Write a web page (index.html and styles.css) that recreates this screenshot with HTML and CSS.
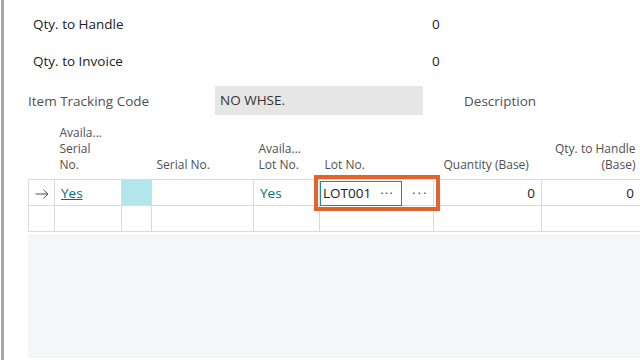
FILE: index.html
```html
<!DOCTYPE html>
<html lang="en">
<head>
  <meta charset="UTF-8" />
  <title>Item Tracking Lines</title>
  <link rel="stylesheet" href="styles.css">
</head>
<body>
  <div class="page">
    <div class="fields">
      <div class="field qty">
        <span class="label">Qty. to Handle</span>
        <span class="value">0</span>
      </div>
      <div class="field qty second">
        <span class="label">Qty. to Invoice</span>
        <span class="value">0</span>
      </div>
      <div class="field code">
        <span class="label muted">Item Tracking Code</span>
        <span class="box">NO WHSE.</span>
        <span class="label muted desc">Description</span>
      </div>
    </div>

    <div class="grid-wrap">
      <table class="lines">
        <colgroup>
          <col class="c-arrow"><col class="c-avser"><col class="c-pick">
          <col class="c-serial"><col class="c-avlot"><col class="c-lot">
          <col class="c-qty"><col class="c-handle"><col class="c-rest">
        </colgroup>
        <thead>
          <tr>
            <th></th>
            <th>Availa...<br>Serial<br>No.</th>
            <th></th>
            <th>Serial No.</th>
            <th>Availa...<br>Lot No.</th>
            <th>Lot No.</th>
            <th class="wide">Quantity (Base)</th>
            <th class="num">Qty. to Handle<br>(Base)</th>
            <th></th>
          </tr>
        </thead>
        <tbody>
          <tr>
            <td class="arrow">
              <svg width="14" height="10" viewBox="0 0 14 10"><path d="M0.5 5H13M8.5 0.8L13 5L8.5 9.2" fill="none" stroke="#505050" stroke-width="1"/></svg>
            </td>
            <td><a class="link" href="#">Yes</a></td>
            <td class="picked"></td>
            <td></td>
            <td class="teal">Yes</td>
            <td class="lot">
              <div class="focus">
                <span class="input">LOT001<span class="dots">&middot;&middot;&middot;</span></span>
                <span class="more">&middot;&middot;&middot;</span>
              </div>
            </td>
            <td class="num">0</td>
            <td class="num">0</td>
            <td></td>
          </tr>
          <tr>
            <td></td><td></td><td></td><td></td><td></td><td></td><td></td><td></td><td></td>
          </tr>
        </tbody>
      </table>
      <div class="empty"></div>
    </div>
  </div>
</body>
</html>
```

FILE: styles.css
```css
html, body {
  margin: 0;
  padding: 0;
  background: #fff;
  font-family: "Open Sans", "Noto Sans", sans-serif;
  color: #212121;
  overflow: hidden;
  width: 640px;
  height: 360px;
}
.page {
  height: 360px;
  border-left: 3px solid #a6a6a6;
  margin-left: 1px;
  box-sizing: border-box;
  overflow: hidden;
}
.fields {
  padding-top: 12px;
}
.field {
  display: flex;
  align-items: center;
  font-size: 13.5px;
}
.field .label, .field .box {
  flex: none;
}
.field.qty {
  height: 24px;
  padding-left: 29px;
}
.field.second {
  margin-top: 13px;
}
.field.qty .label {
  width: 399px;
}
.field.code {
  margin-top: 13px;
  height: 29px;
  padding-left: 24px;
}
.field.code .label {
  width: 187px;
}
.muted {
  color: #505050;
}
.box {
  width: 203px;
  height: 29px;
  line-height: 29px;
  padding-left: 5px;
  background: #e6e6e6;
  color: #333;
}
.field.code .desc {
  margin-left: 41px;
}
.grid-wrap {
  margin-top: 9px;
  margin-left: 24px;
}
.lines {
  border-collapse: collapse;
  table-layout: fixed;
  width: 732px;
  font-size: 13.5px;
}
.c-arrow { width: 26px; }
.c-avser { width: 67px; }
.c-pick { width: 30px; }
.c-serial { width: 102px; }
.c-avlot { width: 66px; }
.c-lot { width: 114px; }
.c-qty { width: 108px; }
.c-handle { width: 99px; }
.c-rest { width: 120px; }
.lines th {
  font-weight: normal;
  font-size: 12px;
  line-height: 16px;
  color: #505050;
  text-align: left;
  vertical-align: bottom;
  padding: 0 5px 6px 5px;
  height: 49px;
  white-space: nowrap;
}
.lines th.wide {
  padding-left: 10px;
}
.lines th.num, .lines td.num {
  text-align: right;
}
.lines td {
  height: 26px;
  border: 1px solid #dadada;
  padding: 0 6px;
  box-sizing: border-box;
}
.lines td.arrow {
  text-align: center;
  padding: 2px 0 0 0;
}
.link {
  color: #00717a;
  text-decoration: underline;
}
.teal {
  color: #00717a;
}
.picked {
  background: #b2e6ea;
}
.lines td.lot {
  position: relative;
  padding: 0;
}
.focus {
  position: absolute;
  left: -6px;
  top: -5px;
  width: 116px;
  height: 28px;
  border: 4px solid #e5612c;
  display: flex;
  align-items: center;
  padding-left: 2px;
}
.input {
  box-sizing: border-box;
  width: 82px;
  height: 25px;
  border: 1px solid #1f8a8f;
  display: flex;
  align-items: center;
  padding-left: 2px;
  color: #212121;
}
.dots {
  margin-left: 9px;
  color: #505050;
  letter-spacing: 1px;
}
.more {
  margin-left: 10px;
  color: #505050;
  letter-spacing: 2px;
}
.empty {
  margin-top: 3px;
  height: 122px;
  background: #f5f6f8;
  border-top: 1px solid #eceef1;
}
```
